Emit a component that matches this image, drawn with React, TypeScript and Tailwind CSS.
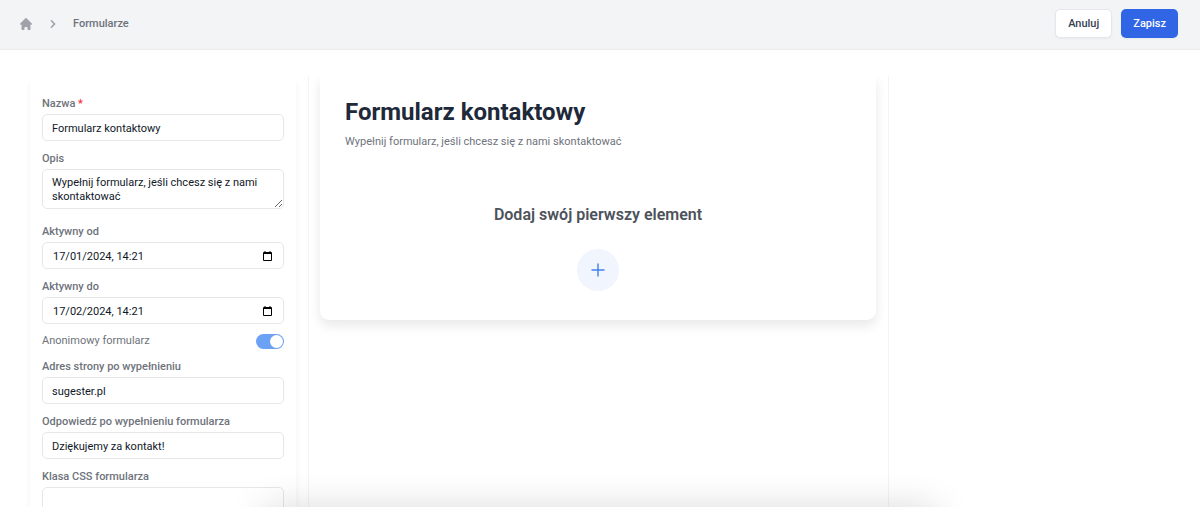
import { useState } from 'react';

const inputClass =
  'block w-full h-[27px] px-[9px] pt-[2px] border border-gray-200 rounded-[5px] bg-white text-[11px] leading-[13px] text-gray-900 outline-none focus:border-blue-400';

function Field({ id, label, required, children }: { id: string; label: string; required?: boolean; children: React.ReactNode }) {
  return (
    <div>
      <label htmlFor={id} className="block mb-px text-[11px] leading-[18px] font-medium text-[#6e737b]">
        {label}
        {required && <span className="text-red-500"> *</span>}
      </label>
      {children}
    </div>
  );
}

function DateInput({ id, value, onChange }: { id: string; value: string; onChange: (value: string) => void }) {
  return (
    <div className="flex items-center h-[27px] pl-[10px] pr-[11px] border border-gray-200 rounded-[5px] bg-white">
      <input
        id={id}
        type="text"
        value={value}
        onChange={(e) => onChange(e.target.value)}
        className="flex-1 min-w-0 pt-[2px] text-[11px] leading-[13px] tabular-nums text-gray-900 outline-none"
      />
      <button type="button" aria-label="Wybierz datę">
        <svg className="w-[9px] h-[10px] block" viewBox="0 0 9 10" fill="black">
          <path fillRule="evenodd" d="M1 1h.5V0h1v1h4V0h1v1H8a1 1 0 011 1v7a1 1 0 01-1 1H1a1 1 0 01-1-1V2a1 1 0 011-1zM1 3v6h7V3z" />
        </svg>
      </button>
    </div>
  );
}

export default function App() {
  const [name, setName] = useState('Formularz kontaktowy');
  const [description, setDescription] = useState('Wypełnij formularz, jeśli chcesz się z nami skontaktować');
  const [activeFrom, setActiveFrom] = useState('17/01/2024, 14:21');
  const [activeTo, setActiveTo] = useState('17/02/2024, 14:21');
  const [anonymous, setAnonymous] = useState(true);
  const [redirectUrl, setRedirectUrl] = useState('sugester.pl');
  const [response, setResponse] = useState('Dziękujemy za kontakt!');
  const [cssClass, setCssClass] = useState('');

  return (
    <div className="flex flex-col h-screen overflow-hidden bg-white font-['Roboto',sans-serif]">
      {/* Top bar */}
      <header className="flex shrink-0 items-center justify-between pl-5 pr-[22px] pt-[9px] pb-[11px] bg-[#f2f4f6] border-b border-[#ebecee]">
        <nav className="flex items-center" aria-label="Breadcrumb">
          <a href="#" aria-label="Strona główna">
            <svg className="w-3 h-3 block text-[#9fa3a9]" viewBox="2 2 16 16" fill="currentColor">
              <path d="M10.707 2.293a1 1 0 00-1.414 0l-7 7a1 1 0 001.414 1.414L4 10.414V17a1 1 0 001 1h2a1 1 0 001-1v-2a1 1 0 011-1h2a1 1 0 011 1v2a1 1 0 001 1h2a1 1 0 001-1v-6.586l.293.293a1 1 0 001.414-1.414l-7-7z" />
            </svg>
          </a>
          <svg className="w-4 h-4 ml-[13px] text-[#9fa3a9]" viewBox="0 0 20 20" fill="currentColor">
            <path fillRule="evenodd" d="M7.293 14.707a1 1 0 010-1.414L10.586 10 7.293 6.707a1 1 0 011.414-1.414l4 4a1 1 0 010 1.414l-4 4a1 1 0 01-1.414 0z" clipRule="evenodd" />
          </svg>
          <a href="#" className="ml-3 text-[11px] leading-4 font-medium text-[#6e737b]">
            Formularze
          </a>
        </nav>
        <div className="flex gap-[9px]">
          <button type="button" className="h-[29px] px-3 pt-[2px] border border-gray-200 rounded-[5px] bg-white shadow-xs text-[11px] font-medium text-gray-700">
            Anuluj
          </button>
          <button type="button" className="h-[29px] px-3 pt-[2px] rounded-[5px] bg-[#3066e6] shadow-xs text-[11px] font-medium text-white">
            Zapisz
          </button>
        </div>
      </header>

      <main className="flex-1 min-h-0 grid grid-cols-[309px_minmax(0,1fr)_311px] pt-[26px]">
        {/* Settings panel */}
        <aside className="min-h-0 overflow-hidden border-r border-gray-100 pl-[30px] pr-3">
          <form className="flex flex-col gap-[9px] px-3 pt-[19px] pb-4 bg-white shadow-[0_8px_6px_rgba(0,0,0,0.06)]">
            <Field id="name" label="Nazwa" required>
              <input id="name" type="text" className={inputClass} value={name} onChange={(e) => setName(e.target.value)} />
            </Field>
            <Field id="description" label="Opis">
              <textarea
                id="description"
                className="block w-full h-10 mb-[5px] px-[9px] py-[6px] border border-gray-200 rounded-[5px] overflow-hidden resize-y text-[11px] leading-[14px] text-gray-900 outline-none"
                value={description}
                onChange={(e) => setDescription(e.target.value)}
              />
            </Field>
            <Field id="active-from" label="Aktywny od">
              <DateInput id="active-from" value={activeFrom} onChange={setActiveFrom} />
            </Field>
            <Field id="active-to" label="Aktywny do">
              <DateInput id="active-to" value={activeTo} onChange={setActiveTo} />
            </Field>
            <label className="flex items-center justify-between text-[11px] leading-4 text-[#6e737b] cursor-pointer">
              Anonimowy formularz
              <input type="checkbox" role="switch" className="peer sr-only" checked={anonymous} onChange={(e) => setAnonymous(e.target.checked)} />
              <span className="flex items-center justify-start w-7 h-[15px] p-px rounded-full bg-gray-200 peer-checked:bg-[#6ba2f5] peer-checked:justify-end">
                <span className="w-[13px] h-[13px] rounded-full bg-white" />
              </span>
            </label>
            <Field id="redirect" label="Adres strony po wypełnieniu">
              <input id="redirect" type="text" className={inputClass} value={redirectUrl} onChange={(e) => setRedirectUrl(e.target.value)} />
            </Field>
            <Field id="response" label="Odpowiedź po wypełnieniu formularza">
              <input id="response" type="text" className={inputClass} value={response} onChange={(e) => setResponse(e.target.value)} />
            </Field>
            <Field id="css-class" label="Klasa CSS formularza">
              <input id="css-class" type="text" className={inputClass} value={cssClass} onChange={(e) => setCssClass(e.target.value)} />
            </Field>
          </form>
        </aside>

        {/* Form preview */}
        <section className="min-h-0 overflow-hidden border-r border-gray-100 pl-[11px] pr-3">
          <div className="px-[25px] pt-5 pb-[29px] rounded-b-[9px] bg-white shadow-[0_6px_12px_rgba(0,0,0,0.09)]">
            <h1 className="text-[24px] leading-8 font-bold text-gray-800">{name}</h1>
            <p className="mt-[6px] text-[11px] leading-4 text-[#6e737b]">{description}</p>
            <div className="flex flex-col items-center mt-[53px]">
              <h2 className="text-[16px] leading-6 font-semibold text-[#4d525b]">Dodaj swój pierwszy element</h2>
              <button type="button" aria-label="Dodaj element" className="flex items-center justify-center w-[42px] h-[42px] mt-[22px] rounded-full bg-[#f0f5fe] text-[#4280ec]">
                <svg className="w-[14px] h-[14px]" viewBox="0 0 14 14" fill="none" stroke="currentColor" strokeWidth={1.4} strokeLinecap="round">
                  <path d="M7 1v12M1 7h12" />
                </svg>
              </button>
            </div>
          </div>
        </section>
      </main>

      <div className="fixed inset-x-[22%] top-full h-10 pointer-events-none shadow-[0_0_36px_rgba(0,0,0,0.15)]" />
    </div>
  );
}
